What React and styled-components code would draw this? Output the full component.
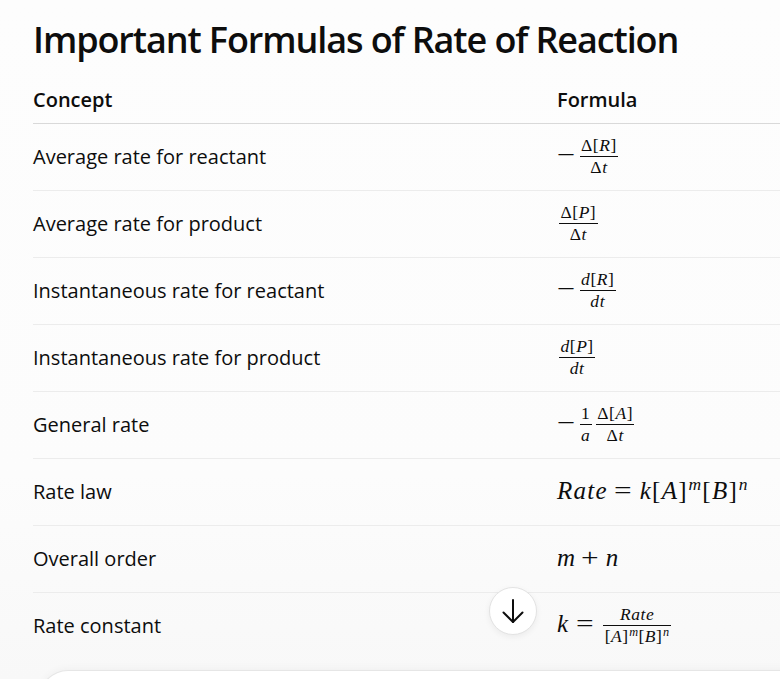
import React from "react";
import styled, { createGlobalStyle } from "styled-components";

const GlobalStyle = createGlobalStyle`
  html, body {
    margin: 0;
    padding: 0;
    background: #fcfcfc;
    overflow: hidden;
  }
  body {
    font-family: "Open Sans", "Noto Sans", sans-serif;
    color: #0d0d0d;
  }
`;

const Page = styled.main`
  position: relative;
  height: 679px;
  padding: 16px 0 0 33px;
  box-sizing: border-box;
  overflow: hidden;
  background: linear-gradient(#fdfdfd 0%, #fcfcfc 70%, #f8f8f8 100%);
`;

const Title = styled.h2`
  margin: 0 0 18px;
  font-size: 36px;
  line-height: 48px;
  font-weight: 600;
  letter-spacing: -1.1px;
  white-space: nowrap;
`;

const Table = styled.div`
  width: 820px;
`;

const HeadRow = styled.div`
  display: grid;
  grid-template-columns: 524px 1fr;
  padding: 3px 0 8px;
  border-bottom: 1px solid #d9d9d9;
  font-size: 20px;
  line-height: 30px;
  font-weight: 600;
`;

const Row = styled.div`
  display: grid;
  grid-template-columns: 524px 1fr;
  align-items: center;
  min-height: 66px;
  border-bottom: ${(p) => (p.$last ? "none" : "1px solid #ececec")};
  font-size: 20px;
  line-height: 30px;
`;

// math bits, KaTeX-ish
const M = styled.span`
  font-family: "Liberation Serif", "DejaVu Serif", serif;
  font-size: 25px;
  line-height: 1;
  letter-spacing: 0.05em;
  white-space: nowrap;
`;

const I = styled.i`
  font-style: italic;
`;

const Minus = styled.span`
  display: inline-block;
  transform: scaleX(1.3);
  margin: 0 0.15em 0 0.06em;
`;

// relations and binary ops: glyph stretched a bit, TeX-like spacing around
const Op = styled.span`
  display: inline-block;
  transform: scaleX(1.25);
  margin: 0 ${(p) => (p.$rel ? "0.33em" : "0.28em")};
`;

const Sup = styled.sup`
  font-size: 0.7em;
  line-height: 0;
  vertical-align: 0.5em;
  margin-left: 0.04em;
`;

const FracBox = styled.span`
  display: inline-flex;
  flex-direction: column;
  vertical-align: middle;
  font-size: 0.7em;
  letter-spacing: 0.03em;
  margin: 0 0.12em;
  text-align: center;
`;

const Num = styled.span`
  padding: 0 0.08em 0.1em;
  border-bottom: 1px solid #0d0d0d;
`;

const Den = styled.span`
  padding: 0.12em 0.08em 0;
`;

const Frac = ({ n, d }) => (
  <FracBox>
    <Num>{n}</Num>
    <Den>{d}</Den>
  </FracBox>
);

const ScrollButton = styled.button`
  position: absolute;
  left: 489px;
  top: 587px;
  width: 48px;
  height: 48px;
  border-radius: 50%;
  border: 1px solid #e3e3e3;
  background: #fff;
  box-shadow: 0 2px 6px rgba(0, 0, 0, 0.06);
  display: flex;
  align-items: center;
  justify-content: center;
  padding: 0;
  z-index: 2;
`;

const Composer = styled.div`
  position: absolute;
  left: 40px;
  top: 671px;
  width: 820px;
  height: 80px;
  border-radius: 28px;
  background: #fff;
  box-shadow: 0 0 0 1px #e6e6e6, 0 -2px 8px rgba(0, 0, 0, 0.04);
`;

const rows = [
  {
    concept: "Average rate for reactant",
    formula: (
      <M>
        <Minus>−</Minus>
        <Frac n={<>Δ[<I>R</I>]</>} d={<>Δ<I>t</I></>} />
      </M>
    ),
  },
  {
    concept: "Average rate for product",
    formula: (
      <M>
        <Frac n={<>Δ[<I>P</I>]</>} d={<>Δ<I>t</I></>} />
      </M>
    ),
  },
  {
    concept: "Instantaneous rate for reactant",
    formula: (
      <M>
        <Minus>−</Minus>
        <Frac n={<><I>d</I>[<I>R</I>]</>} d={<><I>dt</I></>} />
      </M>
    ),
  },
  {
    concept: "Instantaneous rate for product",
    formula: (
      <M>
        <Frac n={<><I>d</I>[<I>P</I>]</>} d={<><I>dt</I></>} />
      </M>
    ),
  },
  {
    concept: "General rate",
    formula: (
      <M>
        <Minus>−</Minus>
        <Frac n="1" d={<I>a</I>} />
        <Frac n={<>Δ[<I>A</I>]</>} d={<>Δ<I>t</I></>} />
      </M>
    ),
  },
  {
    concept: "Rate law",
    formula: (
      <M>
        <I>Rate</I>
        <Op $rel>=</Op>
        <I>k</I>[<I>A</I>]<Sup><I>m</I></Sup>[<I>B</I>]<Sup><I>n</I></Sup>
      </M>
    ),
  },
  {
    concept: "Overall order",
    formula: (
      <M>
        <I>m</I>
        <Op>+</Op>
        <I>n</I>
      </M>
    ),
  },
  {
    concept: "Rate constant",
    formula: (
      <M>
        <I>k</I>
        <Op $rel>=</Op>
        <Frac
          n={<I>Rate</I>}
          d={
            <>
              [<I>A</I>]<Sup><I>m</I></Sup>[<I>B</I>]<Sup><I>n</I></Sup>
            </>
          }
        />
      </M>
    ),
  },
];

const ArrowDown = () => (
  <svg width="24" height="26" viewBox="0 0 24 26" fill="none" stroke="#0d0d0d" strokeWidth="2" strokeLinecap="round" strokeLinejoin="round">
    <path d="M12 2v22" />
    <path d="M2.5 14.5 12 24l9.5-9.5" />
  </svg>
);

export default function App() {
  return (
    <Page>
      <GlobalStyle />
      <Title>Important Formulas of Rate of Reaction</Title>
      <Table>
        <HeadRow>
          <div>Concept</div>
          <div>Formula</div>
        </HeadRow>
        {rows.map((r, i) => (
          <Row key={r.concept} $last={i === rows.length - 1}>
            <div>{r.concept}</div>
            <div>{r.formula}</div>
          </Row>
        ))}
      </Table>
      <ScrollButton aria-label="Scroll down">
        <ArrowDown />
      </ScrollButton>
      <Composer />
    </Page>
  );
}
